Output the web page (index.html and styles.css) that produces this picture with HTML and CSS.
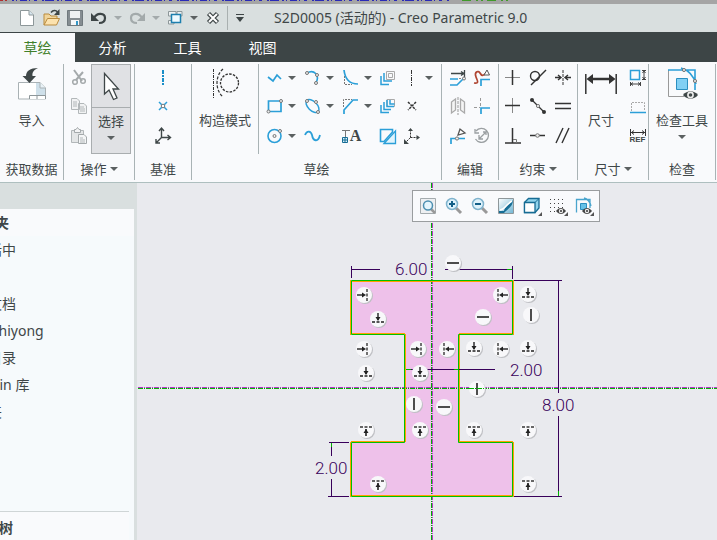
FILE: index.html
```
<!DOCTYPE html>
<html lang="zh-CN">
<head>
<meta charset="utf-8">
<title>S2D0005 (活动的) - Creo Parametric 9.0</title>
<link rel="stylesheet" href="styles.css">
</head>
<body>
<svg class="edge" aria-hidden="true"><path d="M0 .5H7" stroke="#b03030" stroke-dasharray="3 2"/><path d="M12 .5H450" stroke="#2a2ab8" stroke-dasharray="2 2 1 3 7 2 1 4 3 5 2 1 9 3"/><path d="M462 .5H512" stroke="#3f9a2a" stroke-dasharray="9 5 2 3 2 4"/></svg>

<header class="titlebar">
<div class="quick">
<button aria-label="新建"><svg width="20" height="20"><path d="M3.500 2.500H12L16.500 7V17.500H3.500Z" fill="#fff" stroke="#8d9799"/><path d="M12 2.500V7H16.500" fill="#d6e6ef" stroke="#8d9799"/></svg></button>
<button aria-label="打开"><svg width="20" height="20"><path d="M3 17V6H8L10 8H16V11" fill="#f0d49a" stroke="#b98b3f"/><path d="M3 17L6.500 10.500H18.500L15.500 17Z" fill="#fce2ae" stroke="#b98b3f"/><path d="M10 4.500C12 2 15 2 16.500 4" fill="none" stroke="#3d4546" stroke-width="1.500"/><path d="M18.500 1V7H13Z" fill="#3d4546"/></svg></button>
<button aria-label="保存"><svg width="20" height="20"><path d="M2.500 2.500H17.500V17.500H2.500Z" fill="#858d91" stroke="#70797d"/><path d="M5 3H15V10H5Z" fill="#eef1f2"/><path d="M6 12H14V17H6Z" fill="#f5f7f8"/><path d="M11 13H13V17H11Z" fill="#3498c8"/></svg></button>
<button aria-label="撤消"><svg width="20" height="20"><path d="M5 10C8 4 16 5 16 10C16 13 14 15 10 15" fill="none" stroke="#3d4546" stroke-width="2.200"/><path d="M2 5V13H10Z" fill="#3d4546"/></svg></button>
<button class="drop dim" aria-label="撤消列表"><i class="caret"></i></button>
<button aria-label="重做"><svg width="20" height="20"><path d="M15 10C12 4 4 5 4 10C4 13 6 15 10 15" fill="none" stroke="#a3aaab" stroke-width="2.200"/><path d="M18 5V13H10Z" fill="#a3aaab"/></svg></button>
<button class="drop dim" aria-label="重做列表"><i class="caret"></i></button>
<button aria-label="窗口"><svg width="20" height="20"><path d="M3.500 3.500H11V8H3.500ZM3.500 12.500H9V16H3.500ZM12 3.500H17V8H12Z" fill="#eef1f2" stroke="#8d9799"/><path d="M6.500 6.500H15.500V14.500H6.500Z" fill="#eefaff" stroke="#1d7fae" stroke-width="1.500"/></svg></button>
<button class="drop" aria-label="窗口列表"><i class="caret"></i></button>
<button aria-label="关闭"><svg width="20" height="20"><path d="M5.500 5.500L14.500 14.500M14.500 5.500L5.500 14.500" stroke="#3d4546" stroke-width="4.500"/><path d="M6 6L14 14M14 6L6 14" stroke="#fff" stroke-width="2"/></svg></button>
<button class="custom" aria-label="自定义"><svg width="10" height="9"><path d="M1 .5H9" stroke="#3d4546"/><path d="M1 3H9L5 8Z" fill="#3d4546"/></svg></button>
</div>
<h1>S2D0005 (活动的) - Creo Parametric 9.0</h1>
</header>

<nav class="tabs">
<a class="active" href="#sketch">草绘</a>
<a href="#analysis">分析</a>
<a href="#tools">工具</a>
<a href="#view">视图</a>
</nav>

<div class="ribbon" id="sketch">
<section class="group">
<div class="tools">
<button class="large"><svg width="32" height="34"><path d="M2.500 16.500H24L29.500 22V33H2.500Z" fill="#fff" stroke="#a9b1b4"/><path d="M20 17H24L29 22V29H20Z" fill="#cfe0ea"/><path d="M24 16.500V22H29.500" fill="#e9f2f7" stroke="#a9b1b4"/><path d="M13.500 33V29.500H29.500V33M21 29.500V33" fill="#fff" stroke="#8e979a"/><path d="M22 2C14 2 10 5 10 10H6.500L13.500 17L20 10H16.500C16 6 18 4 22 2Z" fill="#3f4748"/></svg><span>导入</span></button>
</div>
<h2>获取数据</h2>
</section>

<section class="group">
<div class="tools">
<div class="stack">
<button aria-label="剪切"><svg width="20" height="20"><path d="M5 2L13 13M14 4L7 12" stroke="#a4a9ab" stroke-width="2"/><circle cx="6" cy="14" r="2.300" fill="none" stroke="#a4a9ab" stroke-width="1.500"/><circle cx="14" cy="13" r="2.300" fill="none" stroke="#a4a9ab" stroke-width="1.500"/></svg></button>
<button aria-label="复制"><svg width="20" height="20"><path d="M2.500 2.500H8L10.500 5V13.500H2.500ZM9.500 7.500H15L17.500 10V17.500H9.500Z" fill="#f1f2f3" stroke="#b2b7b9"/><path d="M4 6H8M4 8H8M4 10H8M11 11H15M11 13H16M11 15H16" stroke="#b2b7b9"/></svg></button>
<button aria-label="粘贴"><svg width="20" height="20"><path d="M2.500 4.500H14.500V16.500H2.500Z" fill="#e4e6e7" stroke="#b2b7b9"/><path d="M5.500 6.500V3.500H7L8.500 1.500L10 3.500H11.500V6.500Z" fill="#f4f4f5" stroke="#a4a9ab"/><path d="M9.500 8.500H15L17.500 11V17.500H9.500Z" fill="#f5f6f7" stroke="#a4a9ab"/><path d="M11 12H14M11 14H16M11 16H16" stroke="#b2b7b9"/></svg></button>
</div>
<div class="split">
<button aria-label="选择"><svg width="22" height="32"><path d="M4.500 3.500V24L9 20L13.500 29.500L17 28L13 19H18.500Z" fill="#fff" stroke="#3f4748" stroke-width="1.300"/></svg></button>
<button>选择<i class="caret"></i></button>
</div>
</div>
<h2>操作<i class="caret"></i></h2>
</section>

<section class="group">
<div class="tools">
<div class="stack center">
<button aria-label="中心线"><svg width="20" height="20"><path d="M10 2V18" stroke="#1a8ec8" stroke-width="2" stroke-dasharray="4 1 2 1"/></svg></button>
<button aria-label="点"><svg width="20" height="20"><path d="M6 6L14 14M14 6L6 14" stroke="#2b9fd8" stroke-width="1.500"/><circle cx="10" cy="10" r="1.800" fill="#fff" stroke="#777"/></svg></button>
<button aria-label="坐标系"><svg width="20" height="20"><path d="M8.500 11.500V3M8.500 11.500H17M8.500 11.500L3 17M6 5L8.500 2L11 5M14.500 9L17.500 11.500L14.500 14M3 13V17H7" fill="none" stroke="#3f4748" stroke-width="1.400"/></svg></button>
</div>
</div>
<h2>基准</h2>
</section>

<section class="group">
<div class="tools">
<button class="large construct"><svg width="32" height="34"><path d="M4.500 3V32" stroke="#333" stroke-dasharray="3 1 1 1"/><path d="M14 3C6 10 6 24 14 31" fill="none" stroke="#333" stroke-width="1.200" stroke-dasharray="3 1.500"/><circle cx="20.500" cy="17" r="9" fill="none" stroke="#333" stroke-width="1.300" stroke-dasharray="2.500 1.300"/></svg><span>构造模式</span></button>
<div class="draw">
<div><button aria-label="线"><svg width="20" height="20"><path d="M3 9L8 13L12 7L16 11" fill="none" stroke="#2b9fd8" stroke-width="1.700"/></svg></button><button class="drop" aria-label="线选项"><i class="caret"></i></button></div>
<div><button aria-label="弧"><svg width="20" height="20"><path d="M4 5C11 1 17 7 13 15" fill="none" stroke="#2b9fd8" stroke-width="1.600"/><g fill="#eee" stroke="#777"><circle cx="4" cy="5" r="1.500"/><circle cx="14" cy="7" r="1.500"/><circle cx="13" cy="15" r="1.500"/></g></svg></button><button class="drop" aria-label="弧选项"><i class="caret"></i></button></div>
<div><button aria-label="圆角"><svg width="20" height="20"><path d="M3.500 8V16.500H11" fill="none" stroke="#777" stroke-dasharray="2 1"/><path d="M3 2C4 11 9 16 17 16" fill="none" stroke="#2b9fd8" stroke-width="1.700"/></svg></button><button class="drop" aria-label="圆角选项"><i class="caret"></i></button></div>
<div><button aria-label="偏移"><svg width="20" height="20"><path d="M7.500 3.500H15.500V11.500H7.500Z" fill="none" stroke="#aaa"/><path d="M9.500 5.500H13.500V9.500H9.500Z" fill="none" stroke="#aaa"/><path d="M5 5V13H13M2 8V16.500H10" fill="none" stroke="#2b9fd8" stroke-width="1.500"/></svg></button></div>
<div><button aria-label="构造中心线"><svg width="20" height="20"><path d="M9.500 2V18" stroke="#333" stroke-dasharray="4 1 1 1"/></svg></button><button class="drop" aria-label="中心线选项"><i class="caret"></i></button></div>

<div><button aria-label="矩形"><svg width="20" height="20"><path d="M3.500 5H16V15.500H3.500Z" fill="none" stroke="#2b9fd8" stroke-width="1.700"/><g fill="#eee" stroke="#777"><circle cx="16" cy="5" r="1.500"/><circle cx="3.500" cy="15.500" r="1.500"/></g></svg></button><button class="drop" aria-label="矩形选项"><i class="caret"></i></button></div>
<div><button aria-label="椭圆"><svg width="20" height="20"><ellipse cx="9.500" cy="10" rx="8" ry="4.500" transform="rotate(45 9.500 10)" fill="none" stroke="#2b9fd8" stroke-width="1.500"/><g fill="#eee" stroke="#777"><circle cx="4" cy="5" r="1.500"/><circle cx="13" cy="6" r="1.500"/><circle cx="15" cy="16" r="1.500"/></g></svg></button><button class="drop" aria-label="椭圆选项"><i class="caret"></i></button></div>
<div><button aria-label="倒角"><svg width="20" height="20"><path d="M2.500 11V3.500H11" fill="none" stroke="#777" stroke-dasharray="2 1"/><path d="M3 18V14L12 4H17" fill="none" stroke="#2b9fd8" stroke-width="1.700"/></svg></button><button class="drop" aria-label="倒角选项"><i class="caret"></i></button></div>
<div><button aria-label="加厚"><svg width="20" height="20"><path d="M8 3.500H15.500V10.500H8Z" fill="none" stroke="#aaa"/><path d="M11 4V8H15.500M8 4V10.500H15M5 6V13.500H12M2 9V16.500H10" fill="none" stroke="#2b9fd8" stroke-width="1.500"/></svg></button></div>
<div><button aria-label="构造点"><svg width="20" height="20"><path d="M6 6L14 14M14 6L6 14" stroke="#333" stroke-width="1.500" stroke-dasharray="2.500 1"/></svg></button></div>

<div><button aria-label="圆"><svg width="20" height="20"><circle cx="9.500" cy="10" r="6.500" fill="none" stroke="#2b9fd8" stroke-width="1.600"/><g fill="#eee" stroke="#777"><circle cx="9.500" cy="10" r="1.500"/><circle cx="15" cy="5" r="1.500"/></g></svg></button><button class="drop" aria-label="圆选项"><i class="caret"></i></button></div>
<div><button aria-label="样条"><svg width="20" height="20"><path d="M2 9C4 4 8 5 9 9C10 15 15 17 17 9" fill="none" stroke="#2b9fd8" stroke-width="1.800"/></svg></button></div>
<div><button class="letter" aria-label="文本"><svg width="9" height="16"><path d="M4.500 2V11M1 2.500H9" stroke="#777"/><path d="M1.500 9.500H6.500V14.500H1.500ZM1.500 12H6.500M4 9.500V14.500" fill="#d8f1fc" stroke="#176c94"/></svg>A</button></div>
<div><button aria-label="投影"><svg width="20" height="20"><path d="M1.500 3.500H13.500V6L5 15.500H1.500Z" fill="none" stroke="#2b9fd8" stroke-width="1.600"/><path d="M5 17.500L16.500 5V17.500Z" fill="#e0f4fd" stroke="#2b9fd8" stroke-width="1.300"/></svg></button></div>
<div><button aria-label="构造坐标系"><svg width="20" height="20"><path d="M8.500 11.500V3M8.500 11.500H17M8.500 11.500L3 17" stroke="#333" stroke-dasharray="2 1"/><path d="M6 5H11L8.500 2ZM14.500 9V14L18 11.500ZM2 13V18H7Z" fill="#3f4748"/></svg></button></div>
</div>
</div>
<h2>草绘</h2>
</section>

<section class="group">
<div class="tools pair">
<button aria-label="修改"><svg width="20" height="20"><path d="M3 5.500H16.500M16.500 2V9M13 3.500L16 5.500L13 7.500" fill="none" stroke="#3f4748" stroke-width="1.300"/><path d="M11 10.500H15" stroke="#888" stroke-dasharray="2 1"/><path d="M2 11H10M2 17H9L15 11" fill="none" stroke="#2b9fd8" stroke-width="1.600"/><circle cx="16" cy="10.500" r="1.500" fill="#eee" stroke="#777"/></svg></button>
<button aria-label="删除段"><svg width="20" height="20"><path d="M2 15C8 16 5 12 4 9C2 4 6 2 8 5C10 9 12 7 14 5" fill="none" stroke="#b04632" stroke-width="1.700"/><path d="M12 7L15 2L17.500 7Z" fill="#fff" stroke="#555"/><path d="M9 18V11.500H18" fill="none" stroke="#2b9fd8" stroke-width="1.700"/></svg></button>
<button aria-label="镜像"><svg width="20" height="20"><path d="M3.500 6L7.500 3V14L3.500 17ZM16.500 6L12.500 3V14L16.500 17Z" fill="#f5f5f5" stroke="#aaa" stroke-width="1.300"/><path d="M10 1V19" stroke="#999" stroke-dasharray="3 1"/></svg></button>
<button aria-label="拐角"><svg width="20" height="20"><path d="M8.500 2V11M2 11.500H8" stroke="#999" stroke-dasharray="3 2"/><path d="M9 18V12H18" fill="none" stroke="#2b9fd8" stroke-width="1.700"/></svg></button>
<button aria-label="分割"><svg width="20" height="20"><path d="M3 18V12.500H17" fill="none" stroke="#2b9fd8" stroke-width="1.700"/><circle cx="9" cy="12.500" r="1.600" fill="#eee" stroke="#777"/><path d="M10 9L12 3L17 7Z" fill="#fff" stroke="#555" stroke-width="1.300"/></svg></button>
<button aria-label="旋转调整大小"><svg width="20" height="20"><path d="M4 5A7 7 0 1 1 3.500 13M3 3V7H7M7 13L14 6M7 9V13H11M11 6H14V9" fill="none" stroke="#9ba0a2" stroke-width="1.300"/></svg></button>
</div>
<h2>编辑</h2>
</section>

<section class="group">
<div class="tools triple">
<button aria-label="竖直"><svg width="20" height="20"><path d="M2 9.500H17" stroke="#888"/><path d="M9.500 2V17" stroke="#333" stroke-width="1.500"/></svg></button>
<button aria-label="相切"><svg width="20" height="20"><circle cx="7" cy="8" r="4.500" fill="none" stroke="#333" stroke-width="1.400"/><path d="M3 17L18 2" stroke="#333" stroke-width="1.400"/></svg></button>
<button aria-label="对称"><svg width="20" height="20"><path d="M10 2V17" stroke="#333" stroke-dasharray="3 1"/><path d="M2 9.500H8M12 9.500H18M5 7L8 9.500L5 12M15 7L12 9.500L15 12" fill="none" stroke="#333" stroke-width="1.400"/></svg></button>
<button aria-label="水平"><svg width="20" height="20"><path d="M9.500 2V17" stroke="#888"/><path d="M2 9.500H17" stroke="#333" stroke-width="1.500"/></svg></button>
<button aria-label="中点"><svg width="20" height="20"><path d="M4 4L16 16" stroke="#333" stroke-width="1.300"/><circle cx="4" cy="4" r="2" fill="#333"/><circle cx="16" cy="16" r="2" fill="#333"/><circle cx="10" cy="10" r="1.600" fill="#eee" stroke="#777"/></svg></button>
<button aria-label="相等"><svg width="20" height="20"><path d="M2 7.500H18M2 12.500H18" stroke="#333" stroke-width="1.500"/></svg></button>
<button aria-label="垂直"><svg width="20" height="20"><path d="M9.500 2V17M2 17H18" stroke="#333" stroke-width="1.500"/><path d="M10 13.500H13.500V17" fill="none" stroke="#777"/></svg></button>
<button aria-label="重合"><svg width="20" height="20"><path d="M2 9.500H17" stroke="#333" stroke-width="1.500"/><circle cx="9.500" cy="9.500" r="1.800" fill="#eee" stroke="#777"/></svg></button>
<button aria-label="平行"><svg width="20" height="20"><path d="M3 17L10 2M9 17L16 2" stroke="#333" stroke-width="1.400"/></svg></button>
</div>
<h2>约束<i class="caret"></i></h2>
</section>

<section class="group">
<div class="tools">
<button class="large measure"><svg width="32" height="34"><path d="M.8 8V28M31.200 8V28" stroke="#333" stroke-width="1.500"/><path d="M6 13H26" stroke="#333" stroke-width="2.500"/><path d="M1.500 13L8 8V18ZM30.500 13L24 8V18Z" fill="#333"/></svg><span>尺寸</span></button>
<div class="stack">
<button aria-label="周长"><svg width="20" height="20"><path d="M2.500 2.500H11.500V11.500H2.500Z" fill="none" stroke="#2b9fd8" stroke-width="1.500"/><path d="M14 2.500H18M14 11.500H18M16 3V11M14.500 5L16 3L17.500 5M14.500 9L16 11L17.500 9M2.500 14V18M12.500 14V18M3 16H12M5 14.500L3 16L5 17.500M10 14.500L12 16L10 17.500" fill="none" stroke="#444"/></svg></button>
<button aria-label="基线"><svg width="20" height="20"><path d="M3.500 15V6.500H16.500V15" fill="none" stroke="#aaa" stroke-dasharray="2 1"/><path d="M2 16.500H18" stroke="#2b9fd8" stroke-width="1.500"/></svg></button>
<button class="ref"><svg width="16" height="7" aria-hidden="true"><path d="M.5 0V7M15.500 0V7M1 3.500H15M4 1.500L1.500 3.500L4 5.500M12 1.500L14.500 3.500L12 5.500" fill="none" stroke="#333"/></svg>REF</button>
</div>
</div>
<h2>尺寸<i class="caret"></i></h2>
</section>

<section class="group">
<div class="tools">
<button class="large"><svg width="32" height="34"><path d="M2.500 4V30.500H18" fill="none" stroke="#999"/><path d="M2 4H29V24M15 2C22 4 27 8 30 18" fill="none" stroke="#2b9fd8" stroke-width="1.600"/><path d="M10.500 12.500H21.500V23.500H10.500Z" fill="#81d0f4" stroke="#2b8fc0"/><circle cx="18" cy="4" r="1.600" fill="#ddd" stroke="#777"/><circle cx="29" cy="15" r="1.600" fill="#ddd" stroke="#777"/><path d="M17 29C21 24 28 24 32 29C28 34 21 34 17 29Z" fill="#3f4748"/><circle cx="24.500" cy="29" r="3.400" fill="#eee"/><circle cx="24.500" cy="29" r="1.800" fill="#3f4748"/></svg><span>检查工具</span><i class="caret"></i></button>
</div>
<h2>检查</h2>
</section>
</div>

<main>
<aside>
<div class="panel">
<h2>夹</h2>
<ul>
<li>话中</li>
<li class="skip">文档</li>
<li class="latin">zhiyong</li>
<li>目录</li>
<li class="latin">kin 库</li>
<li>夹</li>
</ul>
<h2 class="tree">树</h2>
</div>
</aside>

<div class="canvas">
<svg class="sketch" role="img" aria-label="草绘截面">
<defs>
<g id="disc"><circle cx="1" cy="1" r="8" fill="#bfc0c4"/><circle r="8" fill="#f8f8fa"/></g>
<g id="hor"><use href="#disc"/><path d="M-6 0H6" stroke="#222" stroke-width="1.600"/></g>
<g id="ver"><use href="#disc"/><path d="M0 -6V6" stroke="#222" stroke-width="1.600"/></g>
<g id="down"><use href="#disc"/><path d="M-6 3H6" stroke="#555" stroke-width="2" stroke-dasharray="3 1.500"/><path d="M0 -6V1" stroke="#222" stroke-width="1.400"/><path d="M-2.500 -2H2.500L0 2Z" fill="#222"/></g>
<g id="up"><use href="#disc"/><path d="M-6 -3H6" stroke="#666" stroke-width="2" stroke-dasharray="3 1.500"/><path d="M0 6V-1" stroke="#222" stroke-width="1.600"/><path d="M-2.500 3H2.500L0 -1Z" fill="#222"/></g>
<g id="right"><use href="#disc"/><path d="M3 -6V6" stroke="#444" stroke-width="1.500" stroke-dasharray="3 1.500"/><path d="M-7 0H0" stroke="#222" stroke-width="1.400"/><path d="M-2 -2.500V2.500L2 0Z" fill="#222"/></g>
<g id="left"><use href="#disc"/><path d="M-3 -6V6" stroke="#444" stroke-width="1.500" stroke-dasharray="3 1.500"/><path d="M7 0H0" stroke="#222" stroke-width="1.400"/><path d="M2 -2.500V2.500L-2 0Z" fill="#222"/></g>
</defs>
<g transform="translate(-137 -183)">
<path d="M351 280H513V334H459V442H513V496H351V442H405V334H351Z" fill="#eec1ea"/>

<!-- centerlines -->
<g stroke-dasharray="5 1 1 1">
<path d="M138 387.500H3000M432.500 183V3000" stroke="#b535c8"/>
<path d="M138 388.500H3000M431.500 183V3000" stroke="#00b400"/>
</g>

<!-- section outline -->
<path d="M351 281.500H513M351 333.500H405M459 333.500H513M351 441.500H405M459 441.500H513M351 495.500H513M350.500 280V335M350.500 442V497M405.500 334V442M459.500 334V442M513.500 280V335M513.500 442V497" stroke="#ffa000"/>
<path d="M351.500 280.500H512.500V334.500H458.500V442.500H512.500V496.500H351.500V442.500H404.500V334.500H351.500Z" fill="none" stroke="#00c000"/>

<!-- dimensions -->
<path d="M351.500 266V278M512.500 266V279M352 269.500H380M445 269.500H512M406 369.500H495M514 280.500H562M514 496.500H562M558.500 281V393M558.500 416V496M329 442.500H349M328 496.500H349M331.500 443V456M331.500 479V496" stroke="#38005a" fill="none"/>
<path d="M507 269.500H512M406 369.500H411M454 369.500H459M331.500 443V447M558.500 491V496" stroke="#00b400"/>
<g class="dims">
<text x="395" y="275">6.00</text>
<text x="510" y="376">2.00</text>
<text x="542" y="411">8.00</text>
<text x="315" y="474">2.00</text>
</g>

<!-- constraints -->
<use href="#hor" x="453" y="263"/><use href="#hor" x="483" y="317"/><use href="#hor" x="444" y="407"/>
<use href="#ver" x="531" y="315"/><use href="#ver" x="477" y="389"/><use href="#ver" x="414" y="404"/>
<use href="#right" x="364" y="295"/><use href="#right" x="364" y="349"/><use href="#right" x="418" y="349"/>
<use href="#left" x="501" y="295"/><use href="#left" x="447" y="349"/><use href="#left" x="501" y="349"/>
<use href="#down" x="378" y="319"/><use href="#down" x="528" y="294"/><use href="#down" x="474" y="348"/><use href="#down" x="528" y="348"/><use href="#down" x="366" y="373"/><use href="#down" x="420" y="373"/>
<use href="#up" x="366" y="430"/><use href="#up" x="420" y="430"/><use href="#up" x="474" y="430"/><use href="#up" x="528" y="430"/><use href="#up" x="378" y="484"/><use href="#up" x="528" y="484"/>
<path d="M469 388.500H485" stroke="#00b400" stroke-dasharray="5 1 1 1"/>
</g>
</svg>

<div class="viewbar">
<button aria-label="重新调整"><svg width="20" height="20"><path d="M2.500 2.500H17.500V17.500H2.500Z" fill="#eef0f2" stroke="#a4abae"/><path d="M13 13L17 17" stroke="#999" stroke-width="2.500"/><circle cx="10" cy="9.500" r="4.500" fill="#e5f5fc" stroke="#4d8fb0" stroke-width="1.500"/></svg></button>
<button aria-label="放大"><svg width="20" height="20"><path d="M12 12L17 17" stroke="#999" stroke-width="3"/><circle cx="8" cy="8" r="5.500" fill="#dff2fb" stroke="#7fb3cd" stroke-width="1.500"/><path d="M5 8H11M8 5V11" stroke="#135f88" stroke-width="2"/></svg></button>
<button aria-label="缩小"><svg width="20" height="20"><path d="M12 12L17 17" stroke="#999" stroke-width="3"/><circle cx="8" cy="8" r="5.500" fill="#dff2fb" stroke="#7fb3cd" stroke-width="1.500"/><path d="M5 8H11" stroke="#135f88" stroke-width="2"/></svg></button>
<button aria-label="重画"><svg width="20" height="20"><defs><linearGradient id="sheen" x1="0" y1="0" x2="1" y2="1"><stop offset="0" stop-color="#fff"/><stop offset="1" stop-color="#6fb5d3"/></linearGradient></defs><path d="M2.500 2.500H17.500V17.500H2.500Z" fill="url(#sheen)" stroke="#8e979a"/><path d="M3 15H8C9 9 14 9 17 4C17 10 13 12 8 17H3Z" fill="#176e96"/><path d="M4 14C9 14 9 9 16 5" fill="none" stroke="#fff" stroke-width="1.500"/></svg></button>
<button aria-label="显示样式"><svg width="20" height="20"><path d="M2.500 6.500L6.500 2.500H17V12L13 16.500H2.500Z" fill="#92d4ec" stroke="#176c94" stroke-width="1.300"/><path d="M2.500 6.500H13V16.500H2.500Z" fill="#fff" stroke="#176c94" stroke-width="1.300"/><path d="M13 6.500L17 2.500" stroke="#176c94"/><path d="M20 16V20H16Z" fill="#555"/></svg></button>
<button aria-label="基准显示"><svg width="20" height="20"><path d="M2 3.500H16M2 7.500H16M2 11.500H16M2 15.500H9" stroke="#444" stroke-dasharray="1 3"/><path d="M8 15C11 11 15 11 18 15C15 19 11 19 8 15Z" fill="#444"/><circle cx="13" cy="15" r="2.200" fill="#eee"/><circle cx="13" cy="15" r="1.100" fill="#444"/><path d="M20 16V20H16Z" fill="#555"/></svg></button>
<button aria-label="草绘器显示"><svg width="20" height="20"><path d="M2.500 16.500V3.500H16V12M10 2C14 3 16 6 17 10" fill="none" stroke="#4aa5cd" stroke-width="1.300"/><path d="M6.500 7.500H12.500V13.500H6.500Z" fill="#65c1e8" stroke="#2b8fc0"/><path d="M8 15C11 11 15 11 18 15C15 19 11 19 8 15Z" fill="#444"/><circle cx="13" cy="15" r="2.200" fill="#eee"/><circle cx="13" cy="15" r="1.100" fill="#444"/><path d="M20 16V20H16Z" fill="#555"/></svg></button>
</div>
</div>
</main>
</body>
</html>
```
FILE: styles.css
```
* { box-sizing: border-box; }

html, body { height: 100%; }

body {
  margin: 0;
  display: flex;
  flex-direction: column;
  overflow: hidden;
  background: #e9eaee;
  color: #3f4748;
  font: 13px/20px "Noto Sans", "Noto Sans CJK SC", sans-serif;
}

svg { display: block; flex: none; fill: none; }
h1, h2, ul { margin: 0; padding: 0; font-weight: normal; }

button {
  display: flex;
  align-items: center;
  justify-content: center;
  margin: 0;
  padding: 0;
  border: 0;
  background: none;
  color: inherit;
  font: inherit;
}

.caret {
  flex: none;
  border: 4px solid transparent;
  border-top-color: #5b6061;
  border-bottom: 0;
}
.dim .caret { border-top-color: #a3aaab; }

/* window title */
.edge {
  width: 100%;
  height: 4px;
  background: #a5a5a5;
}

.titlebar {
  display: flex;
  flex: none;
  height: 28px;
  background: #d9dfdf;
}
.quick {
  display: flex;
  align-items: center;
  padding-left: 17px;
  gap: 4px;
}
.quick .drop { width: 10px; }
.quick .custom {
  width: 24px;
  height: 24px;
  border-left: 1px solid #a9b0b0;
}
.titlebar h1 {
  padding-left: 23px;
  font-size: 14px;
  line-height: 28px;
  white-space: nowrap;
}

/* tabs */
.tabs {
  display: flex;
  flex: none;
  height: 30px;
  background: #3d4546;
  border-top: 1px solid #3d4546;
}
.tabs a {
  width: 75px;
  color: #fff;
  font-size: 14px;
  line-height: 29px;
  text-align: center;
  text-decoration: none;
}
.tabs .active { background: #f9fafc; color: #3f7f2a; }

/* ribbon */
.ribbon {
  display: grid;
  grid-template-columns: 64px 71px 57px 250px 57px 79px 71px 67px;
  flex: none;
  height: 121px;
  background: #f9fafc;
  border-bottom: 1px solid #aebfbf;
}
.group {
  display: flex;
  flex-direction: column;
  margin: 2px 0;
  border-right: 1px solid #a9b3b5;
}
.group h2 {
  display: flex;
  align-items: center;
  justify-content: center;
  gap: 3px;
  height: 26px;
  padding-top: 3px;
  font-size: 13px;
  white-space: nowrap;
}
.tools { display: flex; height: 90px; }

.large {
  flex: 1;
  flex-direction: column;
  justify-content: flex-start;
  padding-top: 2px;
}
.large span { margin: 10px 0 5px; white-space: nowrap; }
.construct { flex: none; width: 67px; border-right: 1px solid #a9b3b5; }
.measure { flex: none; width: 46px; }

.stack, .pair, .triple, .draw {
  display: grid;
  grid-template-rows: 27px 30px 30px;
  align-content: start;
  justify-items: center;
  align-items: center;
}
.stack { width: 27px; padding-left: 3px; }
.stack.center { width: 100%; padding-left: 0; }
.pair { grid-template-columns: 24px 24px; justify-content: center; }
.triple { grid-template-columns: 25px 25px 25px; justify-content: center; }
.draw {
  grid-template-columns: 38px 38px 38px 23px 38px;
  justify-items: start;
  padding-left: 6px;
}
.draw div { display: flex; }
.draw .drop { width: 14px; }

.letter {
  width: 20px;
  height: 20px;
  font: bold 16px/20px "Liberation Serif", serif;
}

.ref {
  flex-direction: column;
  font: bold 8px/8px "Liberation Sans", sans-serif;
}

.split {
  display: grid;
  grid-template-rows: 42px 1fr;
  width: 40px;
  background: #e0e1e4;
  border: 1px solid #a9adaf;
}
.split button + button {
  flex-direction: column;
  justify-content: flex-start;
  gap: 5px;
  padding-top: 3px;
  border-top: 1px solid #a9adaf;
}

/* navigator */
main { display: flex; flex: 1; min-height: 0; }

aside {
  display: flex;
  flex: none;
  width: 137px;
  padding: 26px 3px 0 0;
  background: #d9dfdf;
}
.panel {
  display: flex;
  flex: 1;
  flex-direction: column;
  overflow: hidden;
  background: #f6fafc;
  font-size: 14px;
  line-height: 27px;
}
.panel h2 {
  margin-left: -5px;
  background: #f9fafc;
  font-size: 14px;
  font-weight: bold;
}
.panel ul {
  flex: 1;
  margin-left: -12px;
  list-style: none;
}
.panel .skip { margin-top: 27px; }
.panel .latin { padding-left: 4px; }
.panel .tree {
  margin: 0 5px 0 -1px;
  padding-top: 4px;
  border-top: 1px solid #cfd5d6;
  line-height: 24px;
}

/* sketch area */
.canvas { position: relative; flex: 1; min-width: 0; }
.sketch { width: 100%; height: 100%; }
.dims {
  fill: #38005a;
  font: 300 17px Roboto, sans-serif;
}

.viewbar {
  position: absolute;
  top: 7px;
  left: 275px;
  display: flex;
  gap: 6px;
  padding: 5px;
  background: #f9fafc;
  border: 1px solid #9a9d9f;
}
```
